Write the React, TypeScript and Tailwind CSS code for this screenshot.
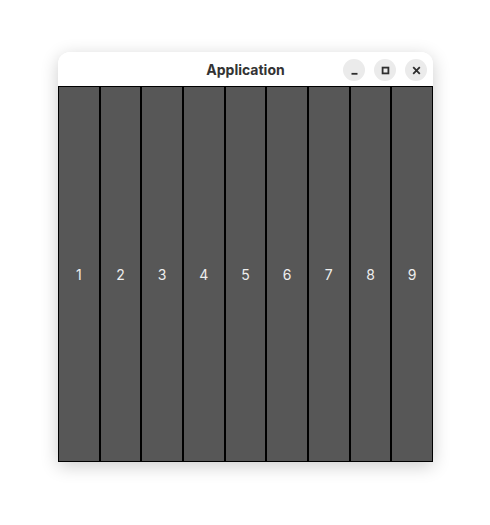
export default function App() {
  const cols = [1, 2, 3, 4, 5, 6, 7, 8, 9];
  return (
    <div className="w-[490px] h-[525px] bg-white pt-[52px] pl-[58px] font-['Inter','Noto_Sans',sans-serif]">
      <div className="w-[375px] h-[410px] flex flex-col rounded-t-[12px] bg-white shadow-[0_4px_18px_rgba(0,0,0,0.2)]">
        {/* Title bar */}
        <div className="relative h-[34px] flex items-center justify-center shrink-0 rounded-t-[12px] bg-white">
          <span className="text-[14px] font-bold text-[#333333]">Application</span>
          <div className="absolute right-[6px] top-[7px] flex gap-[9px]">
            <button className="w-[22px] h-[22px] rounded-full bg-[#ebebeb] flex items-center justify-center">
              <svg width="9" height="9" viewBox="0 0 9 9">
                <path d="M1.5 7.8 H7.5" stroke="#2e2e2e" strokeWidth="1.8" />
              </svg>
            </button>
            <button className="w-[22px] h-[22px] rounded-full bg-[#ebebeb] flex items-center justify-center">
              <svg width="9" height="9" viewBox="0 0 9 9">
                <rect x="1.6" y="1.6" width="5.8" height="5.8" fill="none" stroke="#2e2e2e" strokeWidth="1.8" />
              </svg>
            </button>
            <button className="w-[22px] h-[22px] rounded-full bg-[#ebebeb] flex items-center justify-center">
              <svg width="9" height="9" viewBox="0 0 9 9">
                <path d="M1.2 1.2 L7.8 7.8 M7.8 1.2 L1.2 7.8" stroke="#2e2e2e" strokeWidth="1.8" />
              </svg>
            </button>
          </div>
        </div>
        {/* Columns */}
        <div className="flex-1 grid grid-cols-9">
          {cols.map((n) => (
            <div
              key={n}
              className="border border-black bg-[#575757] flex items-center justify-center text-[14px] text-[#eeeeee]"
            >
              {n}
            </div>
          ))}
        </div>
      </div>
    </div>
  );
}
